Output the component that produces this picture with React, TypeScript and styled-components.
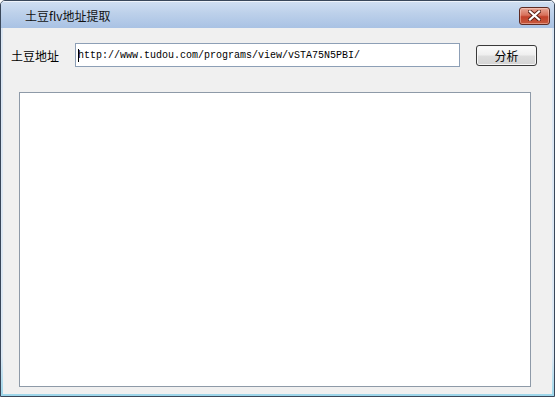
import React from 'react';
import styled, { createGlobalStyle } from 'styled-components';

const GlobalStyle = createGlobalStyle`
    html, body {
        margin: 0;
        padding: 0;
        background: #ffffff;
    }
    body {
        font-family: 'Noto Sans CJK SC', 'DejaVu Sans', sans-serif;
    }
`;

const ScWindow = styled.div`
    display: flex;
    flex-direction: column;
    box-sizing: border-box;
    width: 555px;
    height: 397px;
    border: 1px solid #39475a;
    border-radius: 5px 5px 0 0;
    padding: 0 2px 2px 2px;
    background: linear-gradient(#dbe6f3 0%, #dce8f4 90%, #9cd6ea 100%);
    overflow: hidden;
`;

const TitleBar = styled.div`
    display: flex;
    flex-direction: row;
    align-items: center;
    height: 26px;
    margin: 0 -2px;
    padding: 0 4px 0 24px;
    background: linear-gradient(#cfdef1 0%, #bcd0ea 45%, #a9c2e4 100%);
    border-top: 1px solid #eef3fa;
    flex-shrink: 0;
    user-select: none;
`;

const TitleText = styled.div`
    font-size: 12px;
    color: #111111;
    line-height: 14px;
    padding-top: 1px;
`;

const CloseButton = styled.div`
    display: flex;
    justify-content: center;
    align-items: center;
    margin-left: auto;
    margin-top: 1px;
    width: 31px;
    height: 18px;
    box-sizing: border-box;
    border: 1px solid #5e2a22;
    border-radius: 3px;
    background: linear-gradient(#e7a797 0%, #d8705a 45%, #c3402a 55%, #c65a3e 100%);
    box-shadow: inset 0 0 0 1px rgba(255, 220, 210, 0.45);
`;

const ClientArea = styled.div`
    display: flex;
    flex-direction: column;
    flex: 1;
    background: #f0f0f0;
    padding: 15px 0 0 8px;
`;

const AddressRow = styled.div`
    display: flex;
    flex-direction: row;
    align-items: center;
`;

const Label = styled.div`
    width: 64px;
    font-size: 12px;
    color: #000000;
`;

const UrlInput = styled.div`
    display: flex;
    align-items: center;
    box-sizing: border-box;
    width: 385px;
    height: 24px;
    padding-left: 2px;
    background: #ffffff;
    border: 1px solid #8d9fb6;
    font-family: 'Liberation Mono', monospace;
    font-size: 10px;
    color: #000000;
    white-space: nowrap;
`;

const Caret = styled.span`
    display: inline-block;
    width: 1px;
    height: 13px;
    background: #000000;
    margin-right: -1px;
`;

const Button = styled.div`
    display: flex;
    justify-content: center;
    align-items: center;
    box-sizing: border-box;
    width: 61px;
    height: 21px;
    margin-left: 16px;
    border: 1px solid #3a3a3a;
    border-radius: 3px;
    background: linear-gradient(#fbfbfb 0%, #efefef 48%, #dedede 52%, #d4d4d4 100%);
    box-shadow: inset 0 0 0 1px #f6f6f6;
    font-size: 12px;
    color: #000000;
`;

const OutputBox = styled.div`
    box-sizing: border-box;
    width: 512px;
    height: 295px;
    margin-top: 25px;
    margin-left: 8px;
    background: #ffffff;
    border: 1px solid #8e9aa8;
`;

const CloseIcon = () => (
    <svg width="13" height="11" viewBox="0 0 13 11">
        <path
            d="M2 1.5 L11 9.5 M11 1.5 L2 9.5"
            stroke="#5a2118"
            strokeWidth="4"
            strokeLinecap="square"
        />
        <path
            d="M2 1.5 L11 9.5 M11 1.5 L2 9.5"
            stroke="#ffffff"
            strokeWidth="2.2"
            strokeLinecap="square"
        />
    </svg>
);

const App = () => {
    return (
        <>
            <GlobalStyle />
            <ScWindow>
                <TitleBar>
                    <TitleText>土豆flv地址提取</TitleText>
                    <CloseButton>
                        <CloseIcon />
                    </CloseButton>
                </TitleBar>

                <ClientArea>
                    <AddressRow>
                        <Label>土豆地址</Label>
                        <UrlInput>
                            <Caret />
                            http://www.tudou.com/programs/view/vSTA75N5PBI/
                        </UrlInput>
                        <Button>分析</Button>
                    </AddressRow>

                    <OutputBox />
                </ClientArea>
            </ScWindow>
        </>
    );
};

export default App;
